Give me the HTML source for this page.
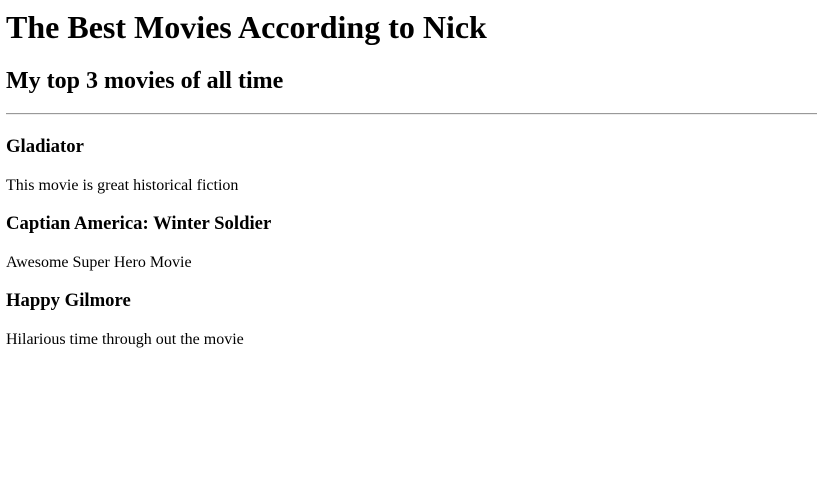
<!DOCTYPE html>
<html><head><style>
body{margin:7px 8px 8px 6px;font-family:"Liberation Serif",serif;color:#000;background:#fff}
h1{font-size:32px;line-height:37px;margin:9px 0 21px}
h2{font-size:24px;margin:19px 0 18px;line-height:28px}
h3{font-size:18.7px;margin:18px 0 19px;line-height:22px}
p{font-size:16px;margin:16px 0;line-height:18px}
hr{border:0;border-top:1px solid #999;border-bottom:1px solid #eee;margin:6px 0 21px}
</style></head><body>
<h1>The Best Movies According to Nick</h1>
<h2>My top 3 movies of all time</h2>
<hr>
<h3>Gladiator</h3>
<p>This movie is great historical fiction</p>
<h3>Captian America: Winter Soldier</h3>
<p>Awesome Super Hero Movie</p>
<h3>Happy Gilmore</h3>
<p>Hilarious time through out the movie</p>
</body></html>
